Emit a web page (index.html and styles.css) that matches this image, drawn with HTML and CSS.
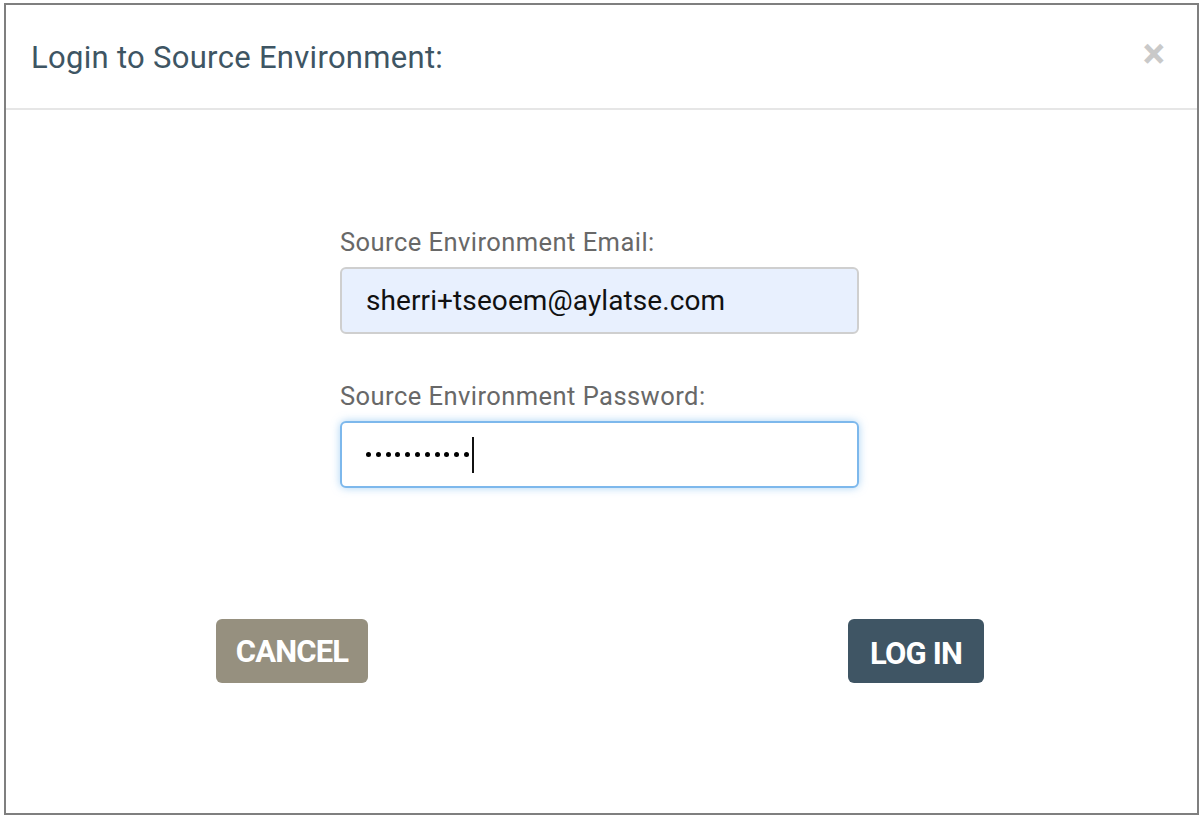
FILE: index.html
```html
<!DOCTYPE html>
<html>
<head>
<meta charset="utf-8">
<link rel="stylesheet" href="styles.css">
</head>
<body>
<div class="frame">
  <div class="modal-header">
    <h4 class="modal-title">Login to Source Environment:</h4>
    <span class="close">&times;</span>
  </div>
  <div class="modal-body">
    <div class="form">
      <label class="label">Source Environment Email:</label>
      <div class="input autofill">sherri+tseoem@aylatse.com</div>
      <label class="label label-2">Source Environment Password:</label>
      <div class="input focus">
        <span class="dots" aria-label="password"><i></i><i></i><i></i><i></i><i></i><i></i><i></i><i></i><i></i><i></i><i></i></span><span class="caret"></span>
      </div>
    </div>
  </div>
  <div class="modal-footer">
    <button class="btn btn-cancel">CANCEL</button>
    <button class="btn btn-login">LOG IN</button>
  </div>
</div>
</body>
</html>
```
FILE: styles.css
```css
html, body {
  margin: 0;
  padding: 0;
  background: #ffffff;
}
body {
  font-family: Roboto, "Liberation Sans", Arial, sans-serif;
  padding: 3px 0 0 4px;
}
.frame {
  box-sizing: border-box;
  width: 1195px;
  height: 812px;
  border: 2px solid #7f7f7f;
  background: #fff;
  display: flex;
  flex-direction: column;
}
.modal-header {
  box-sizing: border-box;
  height: 105px;
  border-bottom: 2px solid #e6e6e6;
  display: flex;
  align-items: center;
  justify-content: space-between;
  padding: 0 32px 0 25px;
}
.modal-title {
  margin: 0;
  font-weight: 400;
  font-size: 31px;
  color: #3e5563;
  letter-spacing: 0.3px;
  padding-top: 2px;
}
.close {
  font-size: 42px;
  font-weight: 700;
  color: #c9c9c9;
  line-height: 1;
  padding-bottom: 6px;
}
.modal-body {
  padding: 120px 0 0 334px;
  height: 390px;
  box-sizing: border-box;
}
.form {
  width: 519px;
  display: flex;
  flex-direction: column;
}
.label {
  font-size: 25.5px;
  color: #686868;
  line-height: 24px;
  letter-spacing: 0.45px;
  margin-bottom: 13px;
}
.label-2 {
  margin-top: 50px;
}
.input {
  box-sizing: border-box;
  height: 67px;
  border: 2px solid #cfcfcf;
  border-radius: 6px;
  padding: 0 24px;
  font-size: 28px;
  letter-spacing: 0.1px;
  color: #111;
  display: flex;
  align-items: center;
}
.autofill {
  background: #e8f0fe;
}
.focus {
  border-color: #7db8ec;
  box-shadow: 0 0 8px rgba(102, 175, 233, 0.55);
  background: #fff;
}
.dots {
  display: inline-flex;
  gap: 4.8px;
  align-items: center;
}
.dots i {
  display: block;
  width: 5px;
  height: 5px;
  border-radius: 50%;
  background: #000;
}
.caret {
  display: inline-block;
  width: 2px;
  height: 36px;
  background: #111;
  margin-left: 3px;
}
.modal-footer {
  display: flex;
  justify-content: space-between;
  padding: 119px 213px 0 210px;
}
.btn {
  border: none;
  border-radius: 6px;
  height: 64px;
  color: #fff;
  font-family: Roboto, "Liberation Sans", Arial, sans-serif;
  font-weight: 700;
  font-size: 31px;
  letter-spacing: -0.8px;
  padding: 0;
}
.btn-cancel {
  width: 152px;
  background: #96907f;
}
.btn-login {
  width: 136px;
  background: #3f5564;
  padding-top: 4px;
}
```
